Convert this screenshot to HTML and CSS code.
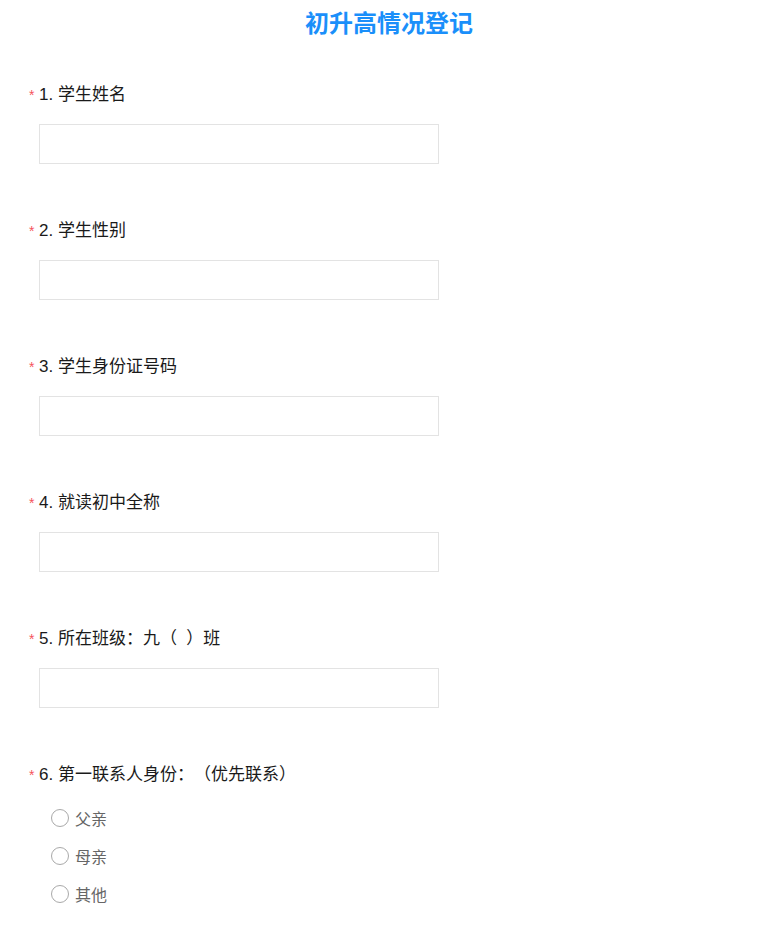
FILE: index.html
```html
<!DOCTYPE html>
<html lang="zh-CN">
<head>
<meta charset="utf-8">
<title>初升高情况登记</title>
<link rel="stylesheet" href="styles.css">
</head>
<body>
<h1 class="title">初升高情况登记</h1>
<div class="questions">
  <div class="question">
    <div class="label"><span class="req">*</span><span>1. 学生姓名</span></div>
    <input class="field" type="text">
  </div>
  <div class="question">
    <div class="label"><span class="req">*</span><span>2. 学生性别</span></div>
    <input class="field" type="text">
  </div>
  <div class="question">
    <div class="label"><span class="req">*</span><span>3. 学生身份证号码</span></div>
    <input class="field" type="text">
  </div>
  <div class="question">
    <div class="label"><span class="req">*</span><span>4. 就读初中全称</span></div>
    <input class="field" type="text">
  </div>
  <div class="question">
    <div class="label"><span class="req">*</span><span>5. 所在班级：九（&nbsp; ）班</span></div>
    <input class="field" type="text">
  </div>
  <div class="question">
    <div class="label"><span class="req">*</span><span>6. 第一联系人身份：（优先联系）</span></div>
    <div class="options">
      <label class="option"><span class="radio"></span><span>父亲</span></label>
      <label class="option"><span class="radio"></span><span>母亲</span></label>
      <label class="option"><span class="radio"></span><span>其他</span></label>
    </div>
  </div>
</div>
</body>
</html>
```
FILE: styles.css
```css
html, body {
  margin: 0;
  padding: 0;
  background: #fff;
}
body {
  font-family: "Liberation Sans", "Noto Sans CJK SC", sans-serif;
  color: #1a1a1a;
  text-spacing-trim: space-all;
}
.title {
  margin: 0;
  height: 44px;
  line-height: 44px;
  text-align: center;
  font-size: 24px;
  font-weight: bold;
  color: #1a8ffa;
  font-family: "Noto Sans CJK SC", sans-serif;
}
.questions {
  display: flex;
  flex-direction: column;
  gap: 55px;
  padding: 39px 0 0 29px;
}
.question {
  display: flex;
  flex-direction: column;
}
.label {
  display: flex;
  align-items: center;
  height: 24px;
  font-size: 17px;
  line-height: 24px;
  color: #1a1a1a;
}
.req {
  width: 10px;
  color: #f5545c;
  font-size: 14px;
  line-height: 24px;
}
.field {
  box-sizing: border-box;
  margin: 17px 0 0 10px;
  width: 400px;
  height: 40px;
  border: 1px solid #e3e3e3;
  border-radius: 0;
  padding: 0 10px;
  outline: none;
  background: #fff;
}
.options {
  display: flex;
  flex-direction: column;
  margin: 12px 0 0 22px;
}
.option {
  display: flex;
  align-items: center;
  height: 38px;
  gap: 6px;
  font-size: 16px;
  color: #666;
}
.radio {
  box-sizing: border-box;
  width: 18px;
  height: 18px;
  border: 1px solid #a9a9a9;
  border-radius: 50%;
  background: #fff;
}
```
